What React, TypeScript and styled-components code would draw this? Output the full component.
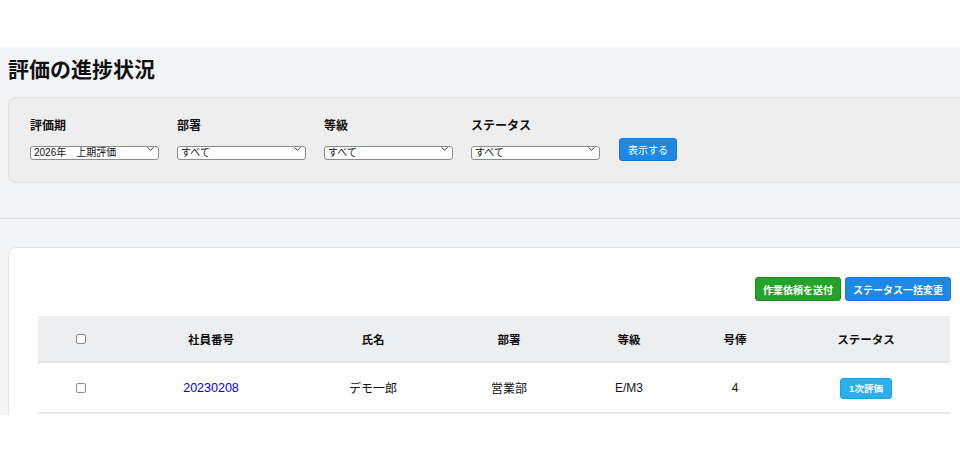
import React from "react";
import styled, { createGlobalStyle } from "styled-components";

const GlobalStyle = createGlobalStyle`
    html, body {
        margin: 0;
        background: #ffffff;
        overflow: hidden;
    }
    body {
        font-family: "Liberation Sans", "Noto Sans CJK JP", sans-serif;
        color: #111111;
    }
`;

const filters = [
    { label: "評価期", value: "2026年　上期評価" },
    { label: "部署", value: "すべて" },
    { label: "等級", value: "すべて" },
    { label: "ステータス", value: "すべて" },
];

const columns = [
    { key: "check", title: "", width: 86 },
    { key: "code", title: "社員番号", width: 174 },
    { key: "name", title: "氏名", width: 150 },
    { key: "dept", title: "部署", width: 122 },
    { key: "grade", title: "等級", width: 118 },
    { key: "step", title: "号俸", width: 94 },
    { key: "status", title: "ステータス", width: 168 },
];

const rows = [
    { code: "20230208", name: "デモ一郎", dept: "営業部", grade: "E/M3", step: "4", status: "1次評価" },
];

const Chevron = () => (
    <svg width="7" height="4" viewBox="0 0 7 4" fill="none">
        <path d="M0.8 0.8l2.7 2.4 2.7-2.4" stroke="#333" strokeWidth="1" strokeLinecap="round" strokeLinejoin="round" />
    </svg>
);

export default function App() {
    return (
        <>
            <GlobalStyle />
            <Page>
                <Title>評価の進捗状況</Title>
                <FilterPanel>
                    {filters.map((f) => (
                        <Field key={f.label}>
                            <FieldLabel>{f.label}</FieldLabel>
                            <SelectWrap>
                                <Select defaultValue={f.value}>
                                    <option>{f.value}</option>
                                </Select>
                                <ChevronBox>
                                    <Chevron />
                                </ChevronBox>
                            </SelectWrap>
                        </Field>
                    ))}
                    <ShowButton type="button">表示する</ShowButton>
                </FilterPanel>
                <Divider />
                <Card>
                    <Actions>
                        <ActionButton type="button" $tone="green">作業依頼を送付</ActionButton>
                        <ActionButton type="button" $tone="blue">ステータス一括変更</ActionButton>
                    </Actions>
                    <Table>
                        <colgroup>
                            {columns.map((c) => (
                                <col key={c.key} style={{ width: c.width }} />
                            ))}
                        </colgroup>
                        <thead>
                            <tr>
                                {columns.map((c) => (
                                    <Th key={c.key}>{c.key === "check" ? <Check type="checkbox" /> : c.title}</Th>
                                ))}
                            </tr>
                        </thead>
                        <tbody>
                            {rows.map((r) => (
                                <tr key={r.code}>
                                    <Td>
                                        <Check type="checkbox" />
                                    </Td>
                                    <Td>
                                        <CodeLink href="#">{r.code}</CodeLink>
                                    </Td>
                                    <Td>{r.name}</Td>
                                    <Td>{r.dept}</Td>
                                    <Td>{r.grade}</Td>
                                    <Td>{r.step}</Td>
                                    <Td>
                                        <Badge>{r.status}</Badge>
                                    </Td>
                                </tr>
                            ))}
                        </tbody>
                    </Table>
                </Card>
            </Page>
        </>
    );
}

const Page = styled.div`
    margin-top: 47px;
    height: 368px;
    background: #f3f4f6;
    overflow: hidden;
    padding: 0 0 0 8px;
`;

const Title = styled.h1`
    margin: 0;
    padding-top: 9px;
    height: 41px;
    font-size: 21px;
    line-height: 27px;
    font-weight: bold;
    color: #111;
`;

const FilterPanel = styled.div`
    box-sizing: border-box;
    width: 974px;
    height: 86px;
    background: #eeeeee;
    border: 1px solid #e2e2e2;
    border-radius: 8px;
    display: flex;
    align-items: flex-end;
    gap: 18px;
    padding: 0 0 22px 21px;
`;

const Field = styled.div`
    display: flex;
    flex-direction: column;
    gap: 8px;
`;

const FieldLabel = styled.label`
    font-size: 12px;
    line-height: 16px;
    font-weight: bold;
    color: #111;
`;

const SelectWrap = styled.div`
    position: relative;
    width: 129px;
`;

const Select = styled.select`
    appearance: none;
    box-sizing: border-box;
    width: 100%;
    height: 14px;
    margin: 0;
    padding: 0 14px 0 3px;
    border: 1px solid #8c8c8c;
    border-radius: 3px;
    background: #ffffff;
    font-family: "Liberation Sans", "Noto Sans CJK JP", sans-serif;
    font-size: 10px;
    line-height: 12px;
    color: #111;
`;

const ChevronBox = styled.span`
    position: absolute;
    right: 5px;
    top: 5px;
    display: flex;
    pointer-events: none;
`;

const ShowButton = styled.button`
    margin: 0 0 -1px 1px;
    height: 23px;
    padding: 0 8px;
    border: 1px solid #1779d6;
    border-radius: 3px;
    background: #1e88e5;
    color: #ffffff;
    font-family: "Liberation Sans", "Noto Sans CJK JP", sans-serif;
    font-size: 10px;
    cursor: pointer;
`;

const Divider = styled.div`
    margin: 35px 0 28px -8px;
    height: 1px;
    background: #dcdde0;
`;

const Card = styled.div`
    box-sizing: border-box;
    width: 974px;
    height: 240px;
    background: #ffffff;
    border: 1px solid #e4e5e7;
    border-radius: 8px;
    padding: 29px 30px 0 29px;
`;

const Actions = styled.div`
    display: flex;
    justify-content: flex-end;
    gap: 4px;
    margin-bottom: 15px;
`;

const ActionButton = styled.button<{ $tone: "green" | "blue" }>`
    height: 24px;
    padding: 0 7px;
    border: 1px solid ${(p) => (p.$tone === "green" ? "#1c8a1f" : "#1779d6")};
    border-radius: 3px;
    background: ${(p) => (p.$tone === "green" ? "#25a229" : "#1e88e5")};
    color: #ffffff;
    font-family: "Liberation Sans", "Noto Sans CJK JP", sans-serif;
    font-size: 10px;
    font-weight: bold;
    cursor: pointer;
`;

const Table = styled.table`
    width: 912px;
    border-collapse: collapse;
    table-layout: fixed;
`;

const Th = styled.th`
    height: 45px;
    padding: 0;
    background: #eceef0;
    border-bottom: 2px solid #e2e4e7;
    font-size: 11.5px;
    font-weight: bold;
    text-align: center;
    vertical-align: middle;
    color: #111;
`;

const Td = styled.td`
    height: 49px;
    padding: 0;
    border-bottom: 2px solid #e6e7e9;
    font-size: 12px;
    text-align: center;
    vertical-align: middle;
    color: #111;
`;

const Check = styled.input`
    appearance: none;
    display: block;
    margin: 0 auto;
    width: 10px;
    height: 10px;
    border: 1px solid #8a8a8a;
    border-radius: 2px;
    background: #ffffff;
`;

const CodeLink = styled.a`
    color: #0000ee;
    font-size: 12.5px;
    text-decoration: none;
`;

const Badge = styled.span`
    display: inline-flex;
    align-items: center;
    justify-content: center;
    width: 52px;
    height: 21px;
    margin-top: 1px;
    border: 1px solid #22a2e0;
    border-radius: 3px;
    box-sizing: border-box;
    background: #29b0f0;
    color: #ffffff;
    font-size: 9.5px;
    font-weight: bold;
`;
